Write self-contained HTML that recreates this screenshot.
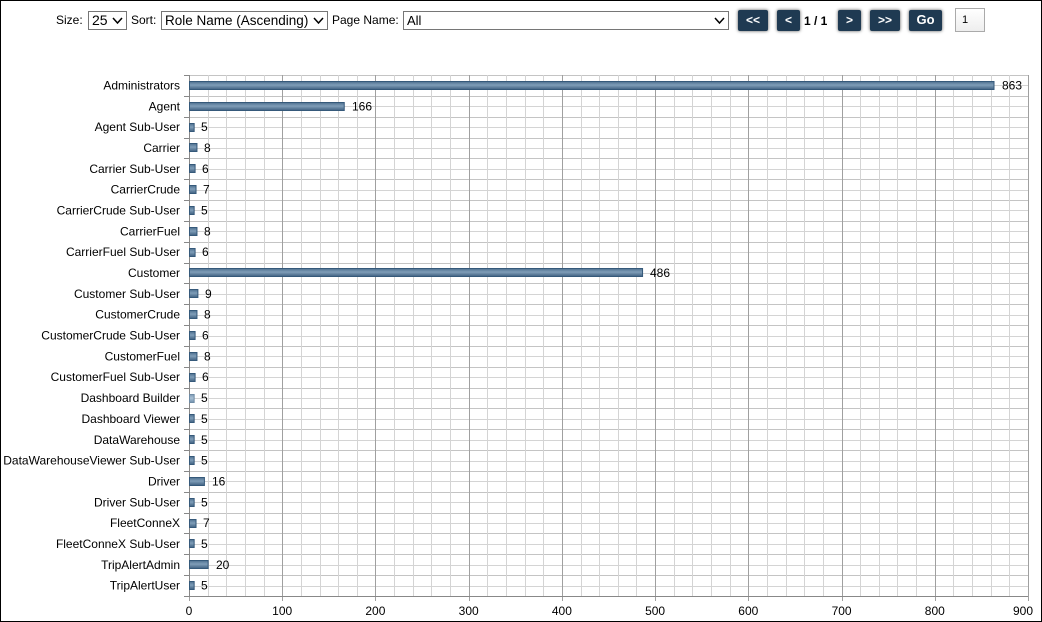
<!DOCTYPE html>
<html><head><meta charset="utf-8"><style>
body{margin:0;width:1042px;height:622px;overflow:hidden;background:#fff;font-family:"Liberation Sans",Arial,sans-serif;font-size:12px;}
.frame{position:absolute;left:0;top:0;width:1040px;height:620px;border:1px solid #000;}
.a{position:absolute;}
.sel{position:absolute;top:11px;height:19px;border:1px solid #767676;box-sizing:border-box;font-size:13px;line-height:17px;padding-left:3px;background:#fff;white-space:nowrap;overflow:hidden;}
.sel svg{position:absolute;right:3px;top:5px;}
.btn{position:absolute;top:10px;height:21px;background:#1f3a52;color:#fff;font-weight:bold;font-size:12px;text-align:center;line-height:20px;border-radius:2px;box-shadow:0 0 3px #555;}
</style></head><body>
<div class="frame"></div>
<div class="a" style="left:56px;top:13px">Size:</div>
<div class="sel" style="left:88px;width:39px;font-size:14px">25<svg width="11" height="8"><path d="M1 1 L5.5 6 L10 1" stroke="#000" stroke-width="1.5" fill="none"/></svg></div>
<div class="a" style="left:131px;top:13px">Sort:</div>
<div class="sel" style="left:161px;width:167px;font-size:13.5px">Role Name (Ascending)<svg width="11" height="8"><path d="M1 1 L5.5 6 L10 1" stroke="#000" stroke-width="1.5" fill="none"/></svg></div>
<div class="a" style="left:332px;top:13px">Page Name:</div>
<div class="sel" style="left:403px;width:326px">All<svg width="11" height="8"><path d="M1 1 L5.5 6 L10 1" stroke="#000" stroke-width="1.5" fill="none"/></svg></div>
<div class="btn" style="left:738px;width:30px">&lt;&lt;</div>
<div class="btn" style="left:777px;width:23px">&lt;</div>
<div class="a" style="left:804px;top:14px;font-weight:bold">1 / 1</div>
<div class="btn" style="left:838px;width:23px">&gt;</div>
<div class="btn" style="left:870px;width:30px">&gt;&gt;</div>
<div class="btn" style="left:909px;width:33px;font-size:13px">Go</div>
<div class="a" style="left:955px;top:8px;width:30px;height:24px;box-sizing:border-box;border:1px solid #aaa;background:linear-gradient(#fff,#eee);font-size:11px;line-height:22px;padding-left:6px">1</div>

<svg class="a" style="left:0;top:0" width="1042" height="622">
<defs><linearGradient id="g" x1="0" y1="0" x2="0" y2="1"><stop offset="0" stop-color="#4d6f8f"/><stop offset="0.45" stop-color="#7f9db8"/><stop offset="1" stop-color="#3f6181"/></linearGradient>
<linearGradient id="g2" x1="0" y1="0" x2="0" y2="1"><stop offset="0" stop-color="#7d9ab4"/><stop offset="0.45" stop-color="#a9c0d4"/><stop offset="1" stop-color="#7090ad"/></linearGradient></defs>
<g id="grid"></g>
<g id="bars"></g>
<g font-family="Liberation Sans, Arial, sans-serif" font-size="12" fill="#000" text-anchor="end">
<text x="180" y="89.4">Administrators</text>
<text x="180" y="110.3">Agent</text>
<text x="180" y="131.1">Agent Sub-User</text>
<text x="180" y="152">Carrier</text>
<text x="180" y="172.8">Carrier Sub-User</text>
<text x="180" y="193.6">CarrierCrude</text>
<text x="180" y="214.5">CarrierCrude Sub-User</text>
<text x="180" y="235.3">CarrierFuel</text>
<text x="180" y="256.2">CarrierFuel Sub-User</text>
<text x="180" y="277">Customer</text>
<text x="180" y="297.9">Customer Sub-User</text>
<text x="180" y="318.7">CustomerCrude</text>
<text x="180" y="339.5">CustomerCrude Sub-User</text>
<text x="180" y="360.4">CustomerFuel</text>
<text x="180" y="381.2">CustomerFuel Sub-User</text>
<text x="180" y="402.1">Dashboard Builder</text>
<text x="180" y="422.9">Dashboard Viewer</text>
<text x="180" y="443.8">DataWarehouse</text>
<text x="180" y="464.6">DataWarehouseViewer Sub-User</text>
<text x="180" y="485.4">Driver</text>
<text x="180" y="506.3">Driver Sub-User</text>
<text x="180" y="527.1">FleetConneX</text>
<text x="180" y="548">FleetConneX Sub-User</text>
<text x="180" y="568.8">TripAlertAdmin</text>
<text x="180" y="589.7">TripAlertUser</text>
</g>
<g font-family="Liberation Sans, Arial, sans-serif" font-size="12" fill="#000">
<text x="1002" y="89.4">863</text>
<text x="352" y="110.3">166</text>
<text x="201" y="131.1">5</text>
<text x="204" y="152">8</text>
<text x="202" y="172.8">6</text>
<text x="203" y="193.6">7</text>
<text x="201" y="214.5">5</text>
<text x="204" y="235.3">8</text>
<text x="202" y="256.2">6</text>
<text x="650" y="277">486</text>
<text x="205" y="297.9">9</text>
<text x="204" y="318.7">8</text>
<text x="202" y="339.5">6</text>
<text x="204" y="360.4">8</text>
<text x="202" y="381.2">6</text>
<text x="201" y="402.1">5</text>
<text x="201" y="422.9">5</text>
<text x="201" y="443.8">5</text>
<text x="201" y="464.6">5</text>
<text x="212" y="485.4">16</text>
<text x="201" y="506.3">5</text>
<text x="203" y="527.1">7</text>
<text x="201" y="548">5</text>
<text x="216" y="568.8">20</text>
<text x="201" y="589.7">5</text>
</g>
<g font-family="Liberation Sans, Arial, sans-serif" font-size="12" fill="#000" text-anchor="middle">
<text x="189" y="615">0</text><text x="282.2" y="615">100</text><text x="375.4" y="615">200</text><text x="468.7" y="615">300</text><text x="561.9" y="615">400</text><text x="655.1" y="615">500</text><text x="748.3" y="615">600</text><text x="841.6" y="615">700</text><text x="934.8" y="615">800</text><text x="1023" y="615">900</text>
</g>
</svg>
<script>
var ns="http://www.w3.org/2000/svg",L=189,R=1028,T=75,B=596,s=(R-L)/900,rh=(B-T)/25;
var g=document.getElementById("grid"),b=document.getElementById("bars");
function ln(x1,y1,x2,y2,c){var e=document.createElementNS(ns,"line");e.setAttribute("x1",x1);e.setAttribute("y1",y1);e.setAttribute("x2",x2);e.setAttribute("y2",y2);e.setAttribute("stroke",c);e.setAttribute("stroke-width",1);g.appendChild(e);}
for(var i=0;i<=50;i++){var y=Math.round(T+i*rh/2)+.5;ln(L,y,R,y,i%2?"#d4d4d4":"#c4c4c4");if(i%2==0)ln(L-5,y,L,y,"#888");}
for(var v=0;v<=900;v+=20){var x=Math.round(L+v*s)+.5;ln(x,T,x,B+(v%100?0:5),v%100?"#d4d4d4":"#a0a0a0");}
ln(L+.5,T,L+.5,B,"#888");ln(L,B+.5,R,B+.5,"#888");
var vals=[863,166,5,8,6,7,5,8,6,486,9,8,6,8,6,5,5,5,5,16,5,7,5,20,5];
vals.forEach(function(v,i){var r=document.createElementNS(ns,"rect");var cy=T+rh*(i+.5);r.setAttribute("x",L+.5);r.setAttribute("y",Math.round(cy-4.5)+.5);r.setAttribute("width",v*s);r.setAttribute("height",8);r.setAttribute("fill",i==15?"url(#g2)":"url(#g)");r.setAttribute("stroke",i==15?"#6f8ca6":"#35597a");b.appendChild(r);});
</script>
</body></html>
